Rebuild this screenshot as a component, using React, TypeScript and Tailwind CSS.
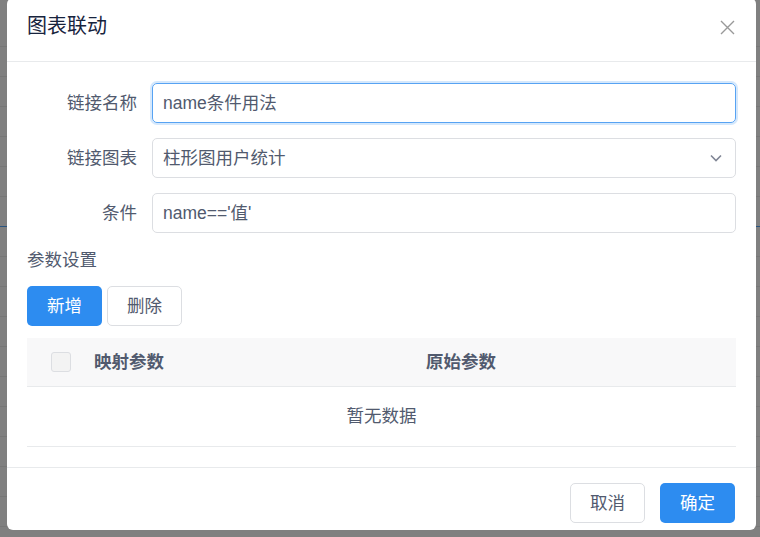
import React from "react";

const FONT = {
  fontFamily:
    '"Helvetica Neue", "Liberation Sans", "Noto Sans CJK SC", sans-serif',
};

type FieldProps = {
  label: string;
  value: string;
  focused?: boolean;
  select?: boolean;
};

function Field({ label, value, focused, select }: FieldProps) {
  return (
    <div className="flex h-[40px] items-center">
      <label className="w-[125px] shrink-0 pr-[15px] text-right text-[17.5px] text-[#515a6e]">
        {label}
      </label>
      <div
        className={
          focused
            ? "flex h-[40px] flex-1 items-center rounded-[5px] border border-[#57a3f3] pl-[10px] pr-[14px] shadow-[0_0_0_2px_rgba(45,140,240,0.2)]"
            : "flex h-[40px] flex-1 items-center rounded-[5px] border border-[#dcdee2] pl-[10px] pr-[14px]"
        }
      >
        <span className="flex-1 text-[17.5px] text-[#515a6e]">{value}</span>
        {select ? (
          <svg width="12" height="8" viewBox="0 0 12 8" className="mr-[-1px]">
            <polyline
              points="1,1.5 6,6.5 11,1.5"
              fill="none"
              stroke="#808695"
              strokeWidth="1.6"
            />
          </svg>
        ) : null}
      </div>
    </div>
  );
}

export default function App() {
  const rows = Array.from({ length: 18 }, (_, i) => i);

  return (
    <div
      className="relative h-[537px] w-[760px] overflow-hidden bg-[#808080]"
      style={FONT}
    >
      {/* page content dimmed behind the modal mask */}
      <div className="flex flex-col pt-[17px]">
        {rows.map((row) => (
          <div
            key={row}
            className={
              row === 6
                ? "h-[30px] border-b border-[#2a5580]"
                : "h-[30px] border-b border-[#777777]"
            }
          />
        ))}
      </div>

      {/* dialog */}
      <div className="absolute left-[7px] top-[-2px] flex h-[532px] w-[749px] flex-col rounded-[6px] bg-white">
        <header className="flex h-[64px] items-start justify-between border-b border-[#e8eaec] px-[20px] pt-[16px]">
          <h1 className="text-[20px] leading-[24px] text-[#17233d]">图表联动</h1>
          <button className="mr-[1px] mt-[6px]">
            <svg width="15" height="15" viewBox="0 0 15 15">
              <path
                d="M1 1 L14 14 M14 1 L1 14"
                stroke="#999"
                strokeWidth="1.4"
                fill="none"
              />
            </svg>
          </button>
        </header>

        <section className="flex flex-1 flex-col px-[20px] pt-[21px]">
          <div className="flex flex-col gap-[15px]">
            <Field label="链接名称" value="name条件用法" focused />
            <Field label="链接图表" value="柱形图用户统计" select />
            <Field label="条件" value="name=='值'" />
          </div>

          <p className="mt-[15px] text-[17.5px] leading-[24px] text-[#515a6e]">
            参数设置
          </p>

          <div className="mt-[14px] flex gap-[5px]">
            <button className="h-[40px] w-[75px] rounded-[5px] bg-[#2d8cf0] text-[17.5px] text-white">
              新增
            </button>
            <button className="h-[40px] w-[75px] rounded-[5px] border border-[#dcdee2] bg-white text-[17.5px] text-[#515a6e]">
              删除
            </button>
          </div>

          <div className="mt-[12px]">
            <div className="grid h-[49px] grid-cols-[67px_332px_1fr] items-center border-b border-[#e8eaec] bg-[#f8f8f9]">
              <div className="flex justify-center">
                <span className="h-[20px] w-[20px] rounded-[3px] border border-[#dcdee2] bg-[#f3f3f3]" />
              </div>
              <span className="text-[17.5px] font-bold text-[#515a6e]">映射参数</span>
              <span className="text-[17.5px] font-bold text-[#515a6e]">原始参数</span>
            </div>
            <div className="flex h-[60px] items-center justify-center border-b border-[#e8eaec] text-[17.5px] text-[#515a6e]">
              暂无数据
            </div>
          </div>
        </section>

        <footer className="flex h-[63px] justify-end gap-[15px] border-t border-[#e8eaec] pr-[21px] pt-[15px]">
          <button className="h-[40px] w-[75px] rounded-[5px] border border-[#dcdee2] bg-white text-[17.5px] text-[#515a6e]">
            取消
          </button>
          <button className="h-[40px] w-[75px] rounded-[5px] bg-[#2d8cf0] text-[17.5px] text-white">
            确定
          </button>
        </footer>
      </div>
    </div>
  );
}
